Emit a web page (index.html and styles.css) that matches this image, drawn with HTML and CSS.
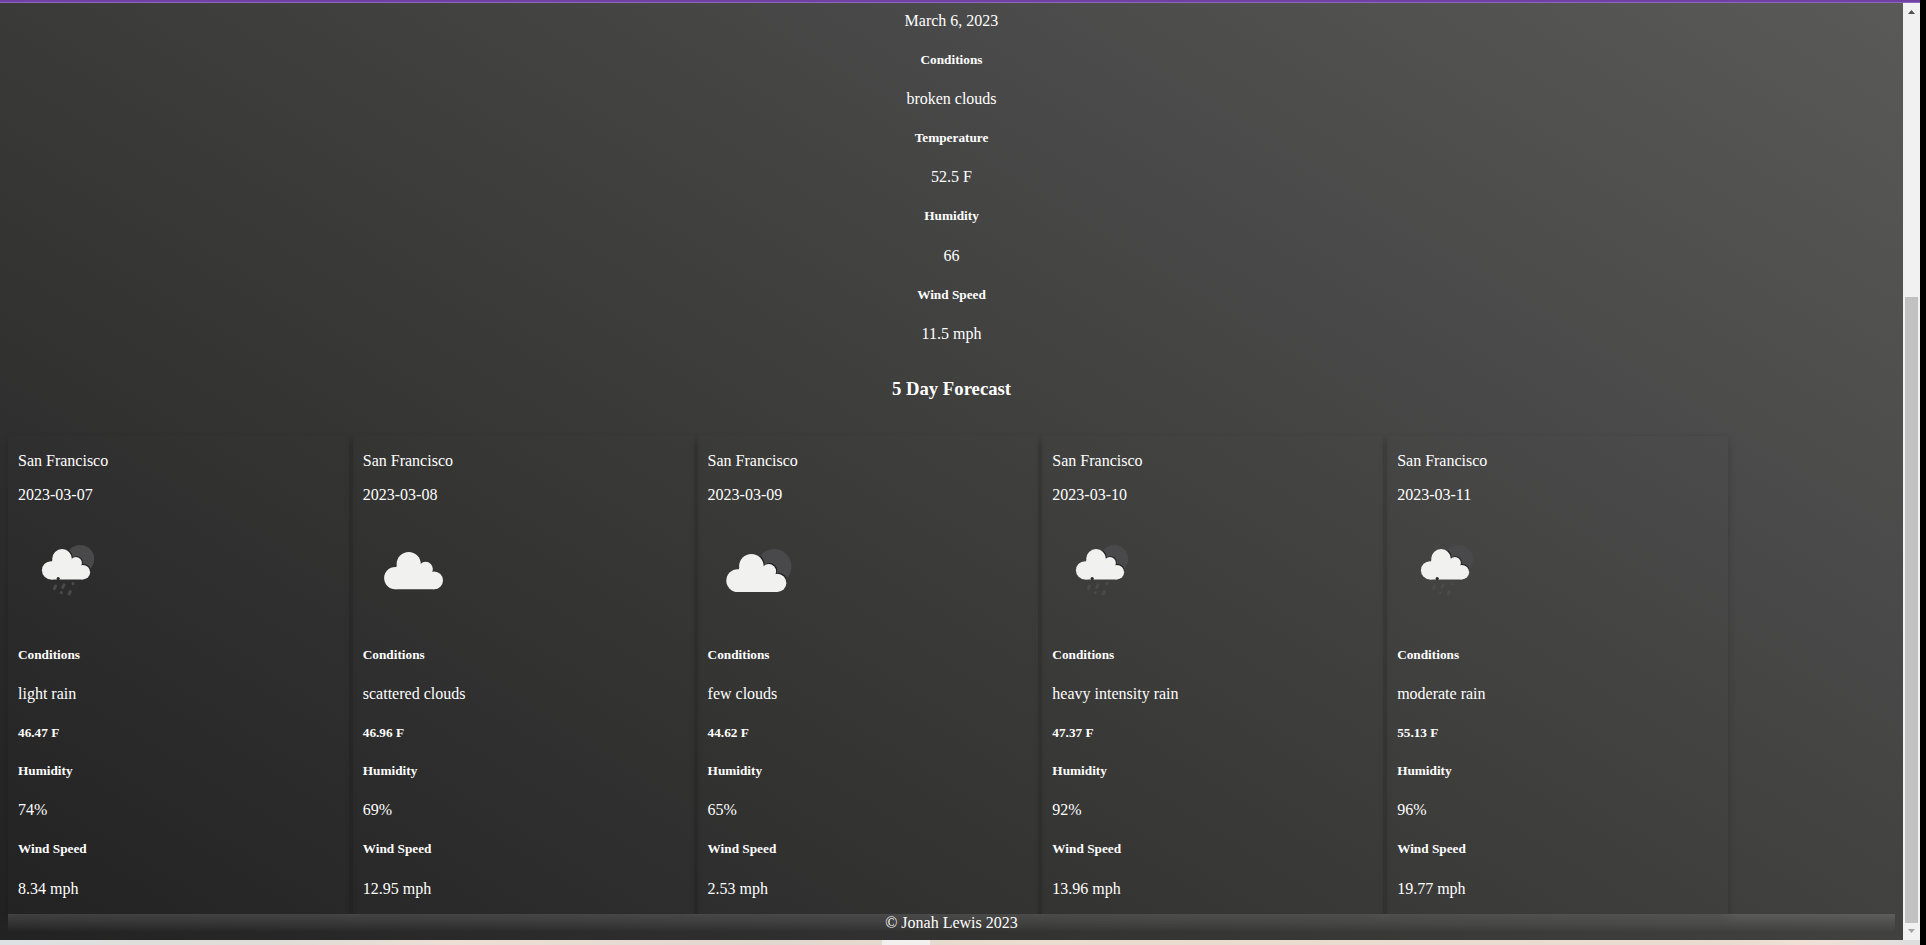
FILE: index.html
```html
<!DOCTYPE html>
<html lang="en">
<head>
<meta charset="utf-8">
<title>Weather Dashboard</title>
<link rel="stylesheet" href="styles.css">
</head>
<body>
<svg class="defs" width="0" height="0" aria-hidden="true">
  <defs>
    <g id="cloud">
      <circle cx="11.3" cy="26.6" r="11.4"/><circle cx="25" cy="12.3" r="12.3"/>
      <circle cx="42.3" cy="17.4" r="7.4"/><circle cx="50.9" cy="28.9" r="9.1"/>
      <path d="M12.7 14h24.6l8 7 5.6 5v12H11.3V20z"/>
    </g>
    <clipPath id="sun"><circle cx="47.6" cy="12.5" r="17.5"/></clipPath>
    <g id="suncloud">
      <circle cx="47.6" cy="12.5" r="17.5" fill="#49494b"/>
      <g clip-path="url(#sun)"><use href="#cloud" x="1" y="-1" fill="#1e1e1e"/></g>
      <use href="#cloud" fill="#f1f1f0"/>
    </g>
    <symbol id="scattered" viewBox="0 0 100 100"><use href="#cloud" transform="translate(21.2 32) scale(.98)" fill="#f1f1f0"/></symbol>
    <symbol id="few" viewBox="0 0 100 100"><use href="#suncloud" x="18.4" y="34"/></symbol>
    <symbol id="rain" viewBox="0 0 100 100">
      <use href="#suncloud" transform="translate(24 29) scale(.802)"/>
      <circle cx="40.2" cy="58.6" r="1.6" fill="#292929"/>
      <g stroke="#4a4a4c" stroke-width="3" stroke-linecap="round">
        <path d="M37.6 66l-1.2 2.6M46 64.8l-1.2 2.6M55 63.6v.1M43.3 72.6v.1M52.3 71.5l-1.2 2.4"/>
      </g>
    </symbol>
  </defs>
</svg>
<div class="chrome-top"></div>
<div class="window">
  <div class="page">
    <main class="today">
      <p>March 6, 2023</p>
      <h5>Conditions</h5>
      <p>broken clouds</p>
      <h5>Temperature</h5>
      <p>52.5 F</p>
      <h5>Humidity</h5>
      <p>66</p>
      <h5>Wind Speed</h5>
      <p>11.5 mph</p>
      <h3>5 Day Forecast</h3>
    </main>
    <section class="forecast">
      <article class="card"><p>San Francisco</p><p>2023-03-07</p><svg class="icon"><use href="#rain"/></svg><h5>Conditions</h5><p>light rain</p><h5>46.47 F</h5><h5>Humidity</h5><p>74%</p><h5>Wind Speed</h5><p>8.34 mph</p></article>
      <article class="card"><p>San Francisco</p><p>2023-03-08</p><svg class="icon"><use href="#scattered"/></svg><h5>Conditions</h5><p>scattered clouds</p><h5>46.96 F</h5><h5>Humidity</h5><p>69%</p><h5>Wind Speed</h5><p>12.95 mph</p></article>
      <article class="card"><p>San Francisco</p><p>2023-03-09</p><svg class="icon"><use href="#few"/></svg><h5>Conditions</h5><p>few clouds</p><h5>44.62 F</h5><h5>Humidity</h5><p>65%</p><h5>Wind Speed</h5><p>2.53 mph</p></article>
      <article class="card"><p>San Francisco</p><p>2023-03-10</p><svg class="icon"><use href="#rain"/></svg><h5>Conditions</h5><p>heavy intensity rain</p><h5>47.37 F</h5><h5>Humidity</h5><p>92%</p><h5>Wind Speed</h5><p>13.96 mph</p></article>
      <article class="card"><p>San Francisco</p><p>2023-03-11</p><svg class="icon"><use href="#rain"/></svg><h5>Conditions</h5><p>moderate rain</p><h5>55.13 F</h5><h5>Humidity</h5><p>96%</p><h5>Wind Speed</h5><p>19.77 mph</p></article>
    </section>
    <footer class="footer">© Jonah Lewis 2023</footer>
  </div>
  <div class="scrollbar">
    <svg class="arrow" viewBox="0 0 17 17"><path d="M5 11h7L8.500 7z" fill="#505050"/></svg>
    <div class="thumb"></div>
    <svg class="arrow" viewBox="0 0 17 17"><path d="M5 6h7L8.500 10z" fill="#a3a3a3"/></svg>
  </div>
</div>
<div class="chrome-bottom"><span class="tab"></span></div>
</body>
</html>
```
FILE: styles.css
```css
* { box-sizing: border-box; }
body {
  margin: 0;
  width: 1926px;
  height: 945px;
  overflow: hidden;
  background: #000;
  color: #fff;
  font: 16px/18px "Liberation Serif", "Times New Roman", serif;
}
.defs { display: block; height: 0; }
.chrome-top {
  width: 1920px;
  height: 3px;
  background: #7040a5;
  border-bottom: 1px solid #8d68b8;
}
.window { display: flex; width: 1920px; height: 937px; }
.page {
  width: 1903px;
  height: 937px;
  padding: 8.8px 8px 8px;
  display: flex;
  flex-direction: column;
  background: linear-gradient(32deg, #222222, #2f2f2f 20%, #393937 35%, #494949 59%, #595957 83%, #666664) bottom / 100% 1354px no-repeat;
}
p { margin: 16px 0; }
h5 { margin: 22.2px 0; font-size: 13.28px; line-height: 15.9px; }
h3 { margin: 0; font-size: 18.72px; line-height: 22px; }
.today { height: 424.2px; flex: none; text-align: center; }
.today p { margin: 0; }
.today h5 { margin: 21.9px 0 22.5px; }
.today h3 { margin-top: 35px; }
.forecast { display: flex; gap: 4px; height: 478px; flex: none; }
.card {
  width: 340.79px;
  flex: none;
  display: flow-root;
  padding: 0 10px;
  box-shadow: 0 4px 8px 0 rgba(0, 0, 0, .2);
}
.icon { display: block; width: 100px; height: 100px; margin-bottom: 26.7px; }
.card p:last-child { margin-top: 22.9px; }
.footer {
  height: 18px;
  text-align: center;
  position: relative;
  background: linear-gradient(rgba(192, 192, 192, .22), rgba(192, 192, 192, 0));
}
.scrollbar {
  width: 17px;
  display: flex;
  flex-direction: column;
  align-items: center;
  background: #f1f1f1;
}
.arrow { display: block; width: 17px; height: 17px; flex: none; }
.thumb { width: 13px; height: 626px; margin-top: auto; background: #c1c1c1; }
.chrome-bottom {
  width: 1920px;
  height: 5px;
  padding-left: 882px;
  background: linear-gradient(90deg, #dde1e2, #dfdcd6 15%, #ecdfd5 24%, #e0d7ce 40%, #eaddcf 54%, #e8dbd0 90%, #f0e0d5 94%, #dedede);
}
.tab { display: block; width: 48px; height: 5px; background: #f1f0ef; }
```
